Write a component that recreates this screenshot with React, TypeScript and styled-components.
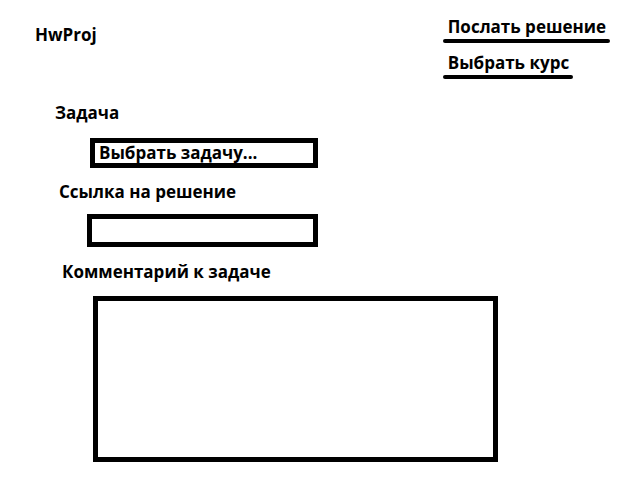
import React from "react";
import styled, { createGlobalStyle } from "styled-components";

const Global = createGlobalStyle`
  html, body { margin: 0; padding: 0; background: #fff; }
  body { font-family: "Open Sans", "Noto Sans", sans-serif; color: #000; }
`;

const Page = styled.div`
  width: 640px;
  height: 480px;
  box-sizing: border-box;
  display: flex;
  flex-direction: column;
`;

const Header = styled.header`
  display: flex;
  justify-content: space-between;
  align-items: flex-start;
  padding: 17px 30px 0 35px;
`;

const Brand = styled.div`
  font-size: 17px;
  font-weight: 700;
  line-height: 20px;
  margin-top: 8px;
`;

const Nav = styled.nav`
  display: flex;
  flex-direction: column;
  align-items: flex-start;
  gap: 10px;
`;

const NavItem = styled.a`
  display: flex;
  flex-direction: column;
  gap: 2px;
  color: #000;
  text-decoration: none;
  cursor: pointer;
`;

const NavText = styled.span`
  font-size: 17px;
  font-weight: 700;
  line-height: 20px;
  padding: 0 4px 0 5px;
`;

const NavLine = styled.span`
  height: 4px;
  background: #000;
  border-radius: 2px;
`;

const Form = styled.form`
  display: flex;
  flex-direction: column;
  align-items: flex-start;
  margin-top: 24px;
`;

const Label = styled.div<{ $indent: number; $gap: number }>`
  font-size: 17px;
  font-weight: 700;
  line-height: 20px;
  margin-left: ${(p) => p.$indent}px;
  margin-bottom: ${(p) => p.$gap}px;
`;

const Box = styled.div<{ $indent: number; $width: number; $height: number; $border: number; $after: number }>`
  box-sizing: border-box;
  margin-left: ${(p) => p.$indent}px;
  width: ${(p) => p.$width}px;
  height: ${(p) => p.$height}px;
  border: ${(p) => p.$border}px solid #000;
  margin-bottom: ${(p) => p.$after}px;
  padding: 0 0 0 4px;
  font-size: 17px;
  font-weight: 700;
  line-height: 20px;
`;

export default function App() {
  return (
    <Page>
      <Global />
      <Header>
        <Brand>HwProj</Brand>
        <Nav>
          <NavItem>
            <NavText>Послать решение</NavText>
            <NavLine />
          </NavItem>
          <NavItem>
            <NavText>Выбрать курс</NavText>
            <NavLine />
          </NavItem>
        </Nav>
      </Header>
      <Form>
        <Label $indent={55} $gap={15}>Задача</Label>
        <Box $indent={90} $width={228} $height={30} $border={5} $after={14}>Выбрать задачу...</Box>
        <Label $indent={59} $gap={12}>Ссылка на решение</Label>
        <Box $indent={87} $width={231} $height={33} $border={5} $after={15} />
        <Label $indent={62} $gap={14}>Комментарий к задаче</Label>
        <Box $indent={93} $width={405} $height={166} $border={5} $after={0} />
      </Form>
    </Page>
  );
}
